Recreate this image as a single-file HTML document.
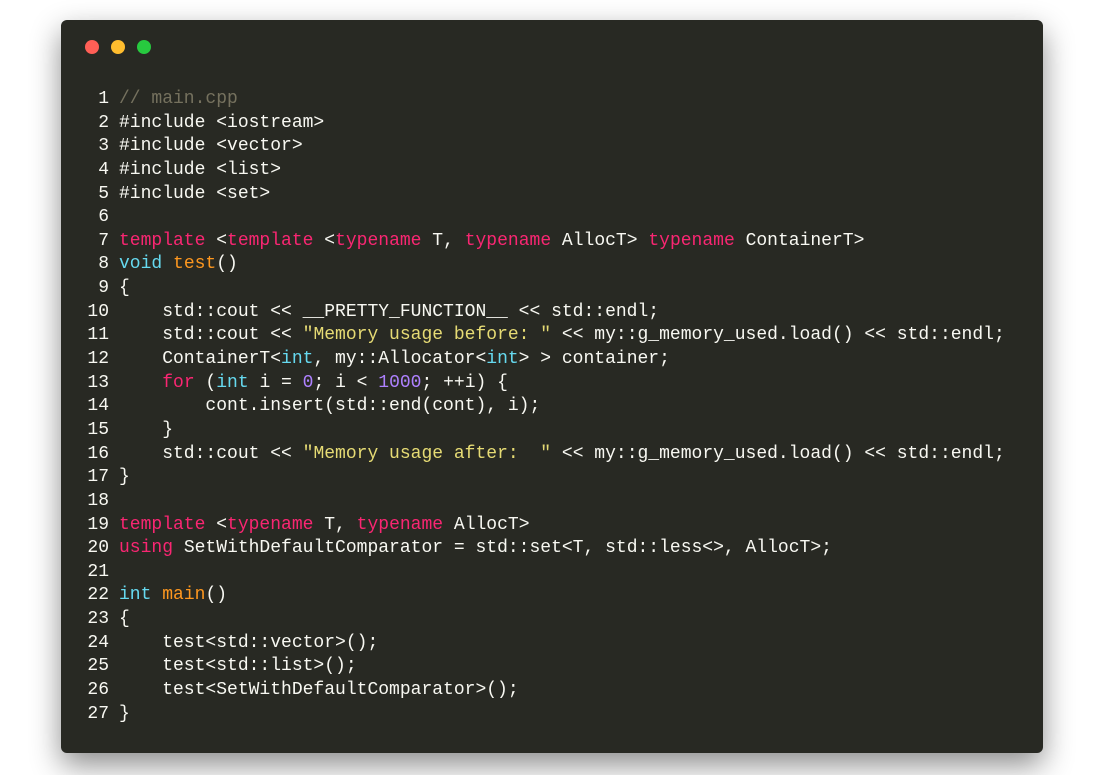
<!DOCTYPE html>
<html><head><meta charset="utf-8"><style>
html,body{margin:0;padding:0;background:#fff;width:1104px;height:775px;overflow:hidden}
.win{position:absolute;left:61px;top:20px;width:982px;height:733px;background:#282923;border-radius:6px;box-shadow:0 12px 30px rgba(0,0,0,0.45)}
.dot{position:absolute;top:20px;width:14px;height:14px;border-radius:50%}
.code{position:absolute;left:0;top:68px;font-family:"Liberation Mono",monospace;font-size:18px;color:#f8f8f2}
.l{height:23.65px;line-height:23.65px;white-space:pre}
.n{display:inline-block;width:48px;text-align:right;margin-right:10px;color:#f8f8f2}
.k{color:#f92672}.t{color:#66d9ef}.f{color:#fd971f}.s{color:#e6db74}.m{color:#ae81ff}.c{color:#75715e}
</style></head><body>
<div class="win">
<div class="dot" style="left:24px;background:#ff5f56"></div>
<div class="dot" style="left:50px;background:#ffbd2e"></div>
<div class="dot" style="left:76px;background:#27c93f"></div>
<div class="code">
<div class="l"><span class="n">1</span><span class="c">// main.cpp</span></div>
<div class="l"><span class="n">2</span>#include &lt;iostream&gt;</div>
<div class="l"><span class="n">3</span>#include &lt;vector&gt;</div>
<div class="l"><span class="n">4</span>#include &lt;list&gt;</div>
<div class="l"><span class="n">5</span>#include &lt;set&gt;</div>
<div class="l"><span class="n">6</span></div>
<div class="l"><span class="n">7</span><span class="k">template</span> &lt;<span class="k">template</span> &lt;<span class="k">typename</span> T, <span class="k">typename</span> AllocT&gt; <span class="k">typename</span> ContainerT&gt;</div>
<div class="l"><span class="n">8</span><span class="t">void</span> <span class="f">test</span>()</div>
<div class="l"><span class="n">9</span>{</div>
<div class="l"><span class="n">10</span>    std::cout &lt;&lt; __PRETTY_FUNCTION__ &lt;&lt; std::endl;</div>
<div class="l"><span class="n">11</span>    std::cout &lt;&lt; <span class="s">"Memory usage before: "</span> &lt;&lt; my::g_memory_used.load() &lt;&lt; std::endl;</div>
<div class="l"><span class="n">12</span>    ContainerT&lt;<span class="t">int</span>, my::Allocator&lt;<span class="t">int</span>&gt; &gt; container;</div>
<div class="l"><span class="n">13</span>    <span class="k">for</span> (<span class="t">int</span> i = <span class="m">0</span>; i &lt; <span class="m">1000</span>; ++i) {</div>
<div class="l"><span class="n">14</span>        cont.insert(std::end(cont), i);</div>
<div class="l"><span class="n">15</span>    }</div>
<div class="l"><span class="n">16</span>    std::cout &lt;&lt; <span class="s">"Memory usage after:  "</span> &lt;&lt; my::g_memory_used.load() &lt;&lt; std::endl;</div>
<div class="l"><span class="n">17</span>}</div>
<div class="l"><span class="n">18</span></div>
<div class="l"><span class="n">19</span><span class="k">template</span> &lt;<span class="k">typename</span> T, <span class="k">typename</span> AllocT&gt;</div>
<div class="l"><span class="n">20</span><span class="k">using</span> SetWithDefaultComparator = std::set&lt;T, std::less&lt;&gt;, AllocT&gt;;</div>
<div class="l"><span class="n">21</span></div>
<div class="l"><span class="n">22</span><span class="t">int</span> <span class="f">main</span>()</div>
<div class="l"><span class="n">23</span>{</div>
<div class="l"><span class="n">24</span>    test&lt;std::vector&gt;();</div>
<div class="l"><span class="n">25</span>    test&lt;std::list&gt;();</div>
<div class="l"><span class="n">26</span>    test&lt;SetWithDefaultComparator&gt;();</div>
<div class="l"><span class="n">27</span>}</div>
</div>
</div>
</body></html>
